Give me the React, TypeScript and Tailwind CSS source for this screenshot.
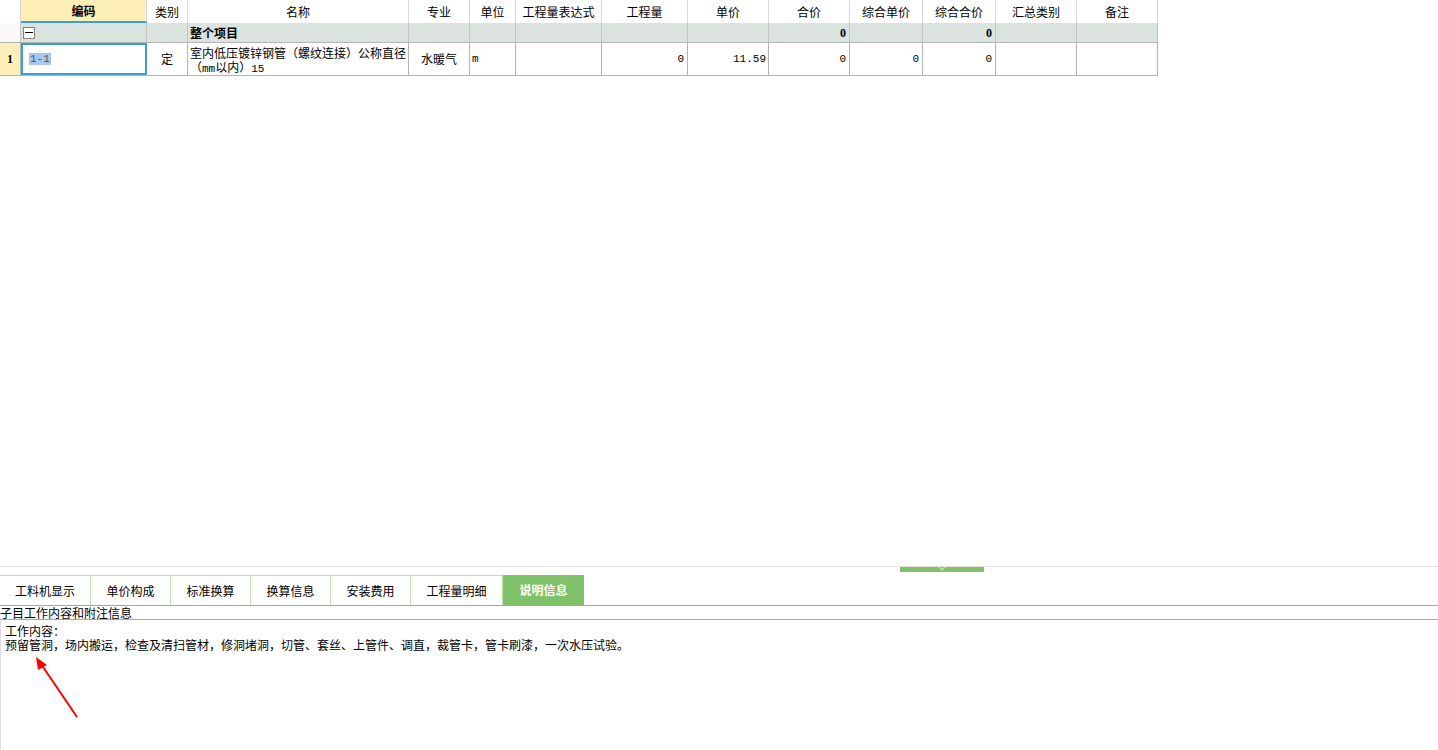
import React from "react";

const font = { fontFamily: '"Noto Sans CJK SC", "Liberation Sans", sans-serif' };

const headers = [
  { w: "w-[21px]", t: "" },
  { w: "w-[126px]", t: "编码" },
  { w: "w-[41px]", t: "类别" },
  { w: "w-[221px]", t: "名称" },
  { w: "w-[61px]", t: "专业" },
  { w: "w-[46px]", t: "单位" },
  { w: "w-[86px]", t: "工程量表达式" },
  { w: "w-[86px]", t: "工程量" },
  { w: "w-[81px]", t: "单价" },
  { w: "w-[81px]", t: "合价" },
  { w: "w-[73px]", t: "综合单价" },
  { w: "w-[73px]", t: "综合合价" },
  { w: "w-[81px]", t: "汇总类别" },
  { w: "w-[81px]", t: "备注" },
];

const tabs = [
  { t: "工料机显示", w: "w-[91px]" },
  { t: "单价构成", w: "w-[80px]" },
  { t: "标准换算", w: "w-[80px]" },
  { t: "换算信息", w: "w-[80px]" },
  { t: "安装费用", w: "w-[80px]" },
  { t: "工程量明细", w: "w-[92px]" },
];

const num = "font-['Liberation_Mono',monospace] text-[11px]";

const App = () => {
  return (
    <div
      className="relative w-[1438px] h-[750px] overflow-hidden bg-white text-[12px] text-black flex flex-col"
      style={font}
    >
      {/* grid */}
      <div className="h-[566px] shrink-0">
        <div className="w-[1158px]">
          {/* header */}
          <div className="flex h-[23px]">
            {headers.map((h, i) => (
              <div
                key={i}
                className={
                  h.w +
                  " shrink-0 flex items-center justify-center border-r border-[#d6d6d6] leading-none " +
                  (i === 1 ? "bg-[#fdefb6] font-bold border-b-2 border-b-[#3a9fd5]" : "")
                }
              >
                {h.t}
              </div>
            ))}
          </div>
          {/* group row */}
          <div className="flex h-[20px] border-b border-[#b4b4b4]">
            {headers.map((h, i) => (
              <div
                key={i}
                className={
                  h.w +
                  " shrink-0 flex items-center border-r border-[#c4c4c4] leading-none " +
                  (i === 0 ? "bg-[#fafafa]" : "bg-[#dae3de]")
                }
              >
                {i === 1 && (
                  <span className="ml-[2px] w-[12px] h-[12px] border border-[#808080] bg-white flex items-center justify-center">
                    <span className="w-[8px] h-[1px] bg-black" />
                  </span>
                )}
                {i === 3 && <span className="ml-[2px] font-bold">整个项目</span>}
                {(i === 9 || i === 11) && (
                  <span className="ml-auto mr-[3px] font-bold font-['Liberation_Serif',serif] text-[12px]">0</span>
                )}
              </div>
            ))}
          </div>
          {/* row 1 */}
          <div className="flex h-[33px] border-b border-[#b4b4b4]">
            <div className="w-[21px] shrink-0 border-r border-[#b4b4b4] bg-[#fdefb6] flex items-center justify-center font-bold font-['Liberation_Serif',serif] text-[12px]">
              1
            </div>
            <div className="w-[126px] shrink-0 outline-2 outline-[#3a9fd5] -outline-offset-2 outline border-r border-[#b4b4b4] pl-[8px] pt-[5px]">
              <span className={num + " bg-[#a9c6ee] text-[#505060] px-[1px]"}>1-1</span>
            </div>
            <div className="w-[41px] shrink-0 border-r border-[#b4b4b4] flex items-center justify-center">定</div>
            <div className="w-[221px] shrink-0 border-r border-[#b4b4b4] pl-[2px] pt-[3px] leading-[14px] whitespace-nowrap">
              <div>室内低压镀锌钢管（螺纹连接）公称直径</div>
              <div>
                （<span className={num}>mm</span>以内）<span className={num}>15</span>
              </div>
            </div>
            <div className="w-[61px] shrink-0 border-r border-[#b4b4b4] flex items-center justify-center">水暖气</div>
            <div className={"w-[46px] shrink-0 border-r border-[#b4b4b4] flex items-center pl-[2px] " + num}>m</div>
            <div className="w-[86px] shrink-0 border-r border-[#b4b4b4]" />
            <div className={"w-[86px] shrink-0 border-r border-[#b4b4b4] flex items-center justify-end pr-[3px] " + num}>0</div>
            <div className={"w-[81px] shrink-0 border-r border-[#b4b4b4] flex items-center justify-end pr-[2px] " + num}>11.59</div>
            <div className={"w-[81px] shrink-0 border-r border-[#b4b4b4] flex items-center justify-end pr-[3px] " + num}>0</div>
            <div className={"w-[73px] shrink-0 border-r border-[#b4b4b4] flex items-center justify-end pr-[3px] " + num}>0</div>
            <div className={"w-[73px] shrink-0 border-r border-[#b4b4b4] flex items-center justify-end pr-[3px] " + num}>0</div>
            <div className="w-[81px] shrink-0 border-r border-[#b4b4b4]" />
            <div className="w-[81px] shrink-0 border-r border-[#b4b4b4]" />
          </div>
        </div>
      </div>

      {/* splitter */}
      <div className="relative h-[9px] shrink-0 border-t border-[#e2e2e2]">
        <div className="absolute left-[900px] top-0 w-[84px] h-[5px] bg-[#80c26a] flex justify-center">
          <svg width="8" height="5" viewBox="0 0 8 5">
            <path d="M1 0 L4 3 L7 0" stroke="#c8e8bc" strokeWidth="1.2" fill="none" />
          </svg>
        </div>
      </div>

      {/* tabs */}
      <div className="flex h-[31px] shrink-0 border-b border-[#80c26a]">
        {tabs.map((t, i) => (
          <div
            key={i}
            className={
              t.w +
              " shrink-0 flex items-center justify-center border-t border-r border-[#b9e3a9] text-[12px]"
            }
          >
            {t.t}
          </div>
        ))}
        <div className="w-[81px] shrink-0 flex items-center justify-center bg-[#80c26a] text-white font-bold">
          说明信息
        </div>
      </div>

      <div className="h-[14px] shrink-0 border-b border-[#a8a8a8] leading-[13px] whitespace-nowrap">
        子目工作内容和附注信息
      </div>

      <div className="flex-1 border-l border-[#dcdce6] pl-[4px] pt-[4px] leading-[14px]">
        <div>工作内容：</div>
        <div>预留管洞，场内搬运，检查及清扫管材，修洞堵洞，切管、套丝、上管件、调直，裁管卡，管卡刷漆，一次水压试验。</div>
      </div>

      {/* annotation arrow */}
      <svg className="absolute left-0 top-0 pointer-events-none" width="1438" height="750">
        <line x1="77" y1="717" x2="41" y2="664" stroke="#ff0000" strokeWidth="2" />
        <polygon points="36,657 47,665 38,670" fill="#ff0000" />
      </svg>
    </div>
  );
};

export default App;
